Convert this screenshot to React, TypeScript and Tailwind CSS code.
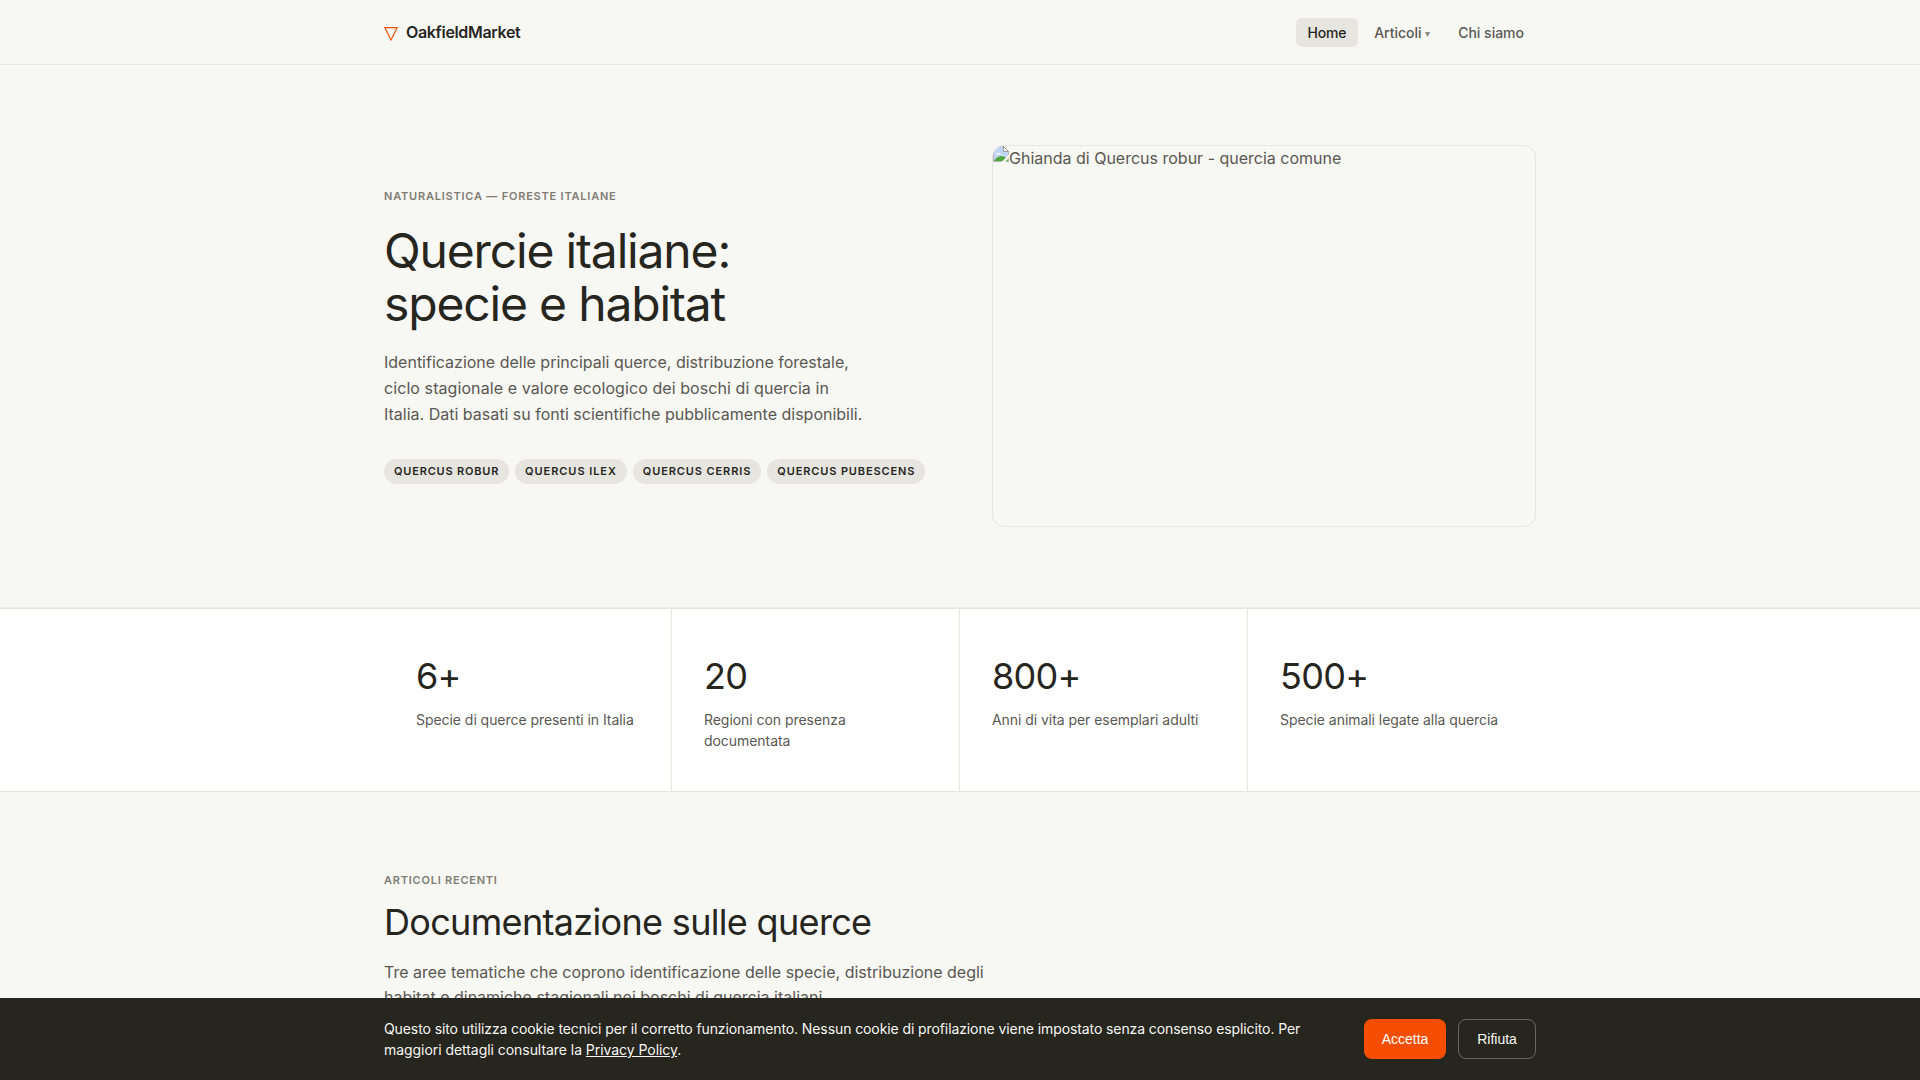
import { clsx } from 'clsx';

interface NavItem {
    label: string;
    active?: boolean;
    hasMenu?: boolean;
}

const navItems: NavItem[] = [
    { label: 'Home', active: true },
    { label: 'Articoli', hasMenu: true },
    { label: 'Chi siamo' },
];

const species = [
    { name: 'Quercus robur', tracking: 'tracking-[0.8px]' },
    { name: 'Quercus ilex', tracking: 'tracking-[0.94px]' },
    { name: 'Quercus cerris', tracking: 'tracking-[0.9px]' },
    { name: 'Quercus pubescens', tracking: 'tracking-[0.88px]' },
];

const stats = [
    { value: '6+', label: 'Specie di querce presenti in Italia' },
    { value: '20', label: 'Regioni con presenza documentata' },
    { value: '800+', label: 'Anni di vita per esemplari adulti' },
    { value: '500+', label: 'Specie animali legate alla quercia' },
];

function Header() {
    return (
        <header className="border-b border-[#e6e5e0] bg-[#f7f7f4]">
            <div className="mx-auto flex h-16 w-[1152px] items-center justify-between">
                <a href="#" className="flex items-center gap-2 text-base font-semibold tracking-[-0.34px] text-[#26251e]">
                    <svg width="14" height="14" viewBox="0 0 14 14" fill="none" className="mt-1">
                        <path d="M0.8 0.6H13.2L7 13Z" stroke="#f54e00" strokeWidth="1.1" />
                    </svg>
                    OakfieldMarket
                </a>
                <nav className="flex items-center gap-1">
                    {navItems.map(item => (
                        <a
                            key={item.label}
                            href="#"
                            className={clsx(
                                'flex items-center rounded-md px-3 py-1 text-sm leading-[21px] font-medium',
                                item.active ? 'bg-[#e6e5e0] tracking-[-0.25px] text-[#26251e]' : 'text-[#5a5852]'
                            )}
                        >
                            {item.label}
                            {item.hasMenu && (
                                <span className="mt-1 ml-[3.5px] font-['DejaVu_Sans',sans-serif] text-[10px] leading-3 font-normal opacity-70">
                                    ▾
                                </span>
                            )}
                        </a>
                    ))}
                </nav>
            </div>
        </header>
    );
}

function BrokenImageIcon() {
    return (
        <svg width="16" height="16" viewBox="0 0 16 16" className="shrink-0">
            <path d="M0.5 0.5H10.5L15.5 5.5V15.5H0.5Z" fill="#c2d5f7" stroke="#b4b4b4" />
            <path d="M3 8.5C3 7.2 4.4 6.8 5 7.4C5.6 6.2 7.6 6.6 7.6 8.5Z" fill="#fff" />
            <path d="M1 15V14.5C3 12 6 10 8.5 10C10.5 10 12.5 11 15 13.5V15Z" fill="#4fa83d" />
            <path d="M8.5 16L16 8.5V12L12 16Z" fill="#f7f7f4" />
            <path d="M10.5 0.5V5.5H15.5Z" fill="#fff" stroke="#9a9a9a" />
        </svg>
    );
}

function Hero() {
    return (
        <section className="border-b border-[#ecebe7] py-20">
            <div className="mx-auto grid w-[1152px] grid-cols-2 items-center gap-16">
                <div className="pb-px">
                    <p className="mb-5 text-[11px] leading-[18px] font-semibold tracking-[0.79px] text-[#807d72] uppercase">
                        Naturalistica — Foreste italiane
                    </p>
                    <h1 className="mb-[19px] text-5xl leading-[1.1] font-normal tracking-[-1.16px] text-[#26251e]">
                        Quercie italiane:
                        <br />
                        specie e habitat
                    </h1>
                    <p className="mb-8 max-w-[480px] text-base leading-[26px] text-[#5a5852]">
                        Identificazione delle principali querce, distribuzione forestale,{' '}
                        <span className="tracking-[0.08px]">
                            ciclo stagionale e valore ecologico dei boschi di quercia in{' '}
                        </span>
                        Italia. Dati basati su fonti scientifiche pubblicamente disponibili.
                    </p>
                    <div className="flex gap-1.5">
                        {species.map(item => (
                            <span
                                key={item.name}
                                className={clsx(
                                    'rounded-full bg-[#e6e5e0] px-2.5 py-1 text-[11px] leading-[17px] font-semibold whitespace-nowrap text-[#26251e] uppercase',
                                    item.tracking
                                )}
                            >
                                {item.name}
                            </span>
                        ))}
                    </div>
                </div>
                <div className="flex h-[382px] items-start overflow-hidden rounded-xl border border-[#e6e5e0]">
                    <BrokenImageIcon />
                    <span className="text-base leading-6 text-[#5a5852]">Ghianda di Quercus robur - quercia comune</span>
                </div>
            </div>
        </section>
    );
}

function Stats() {
    return (
        <section className="border-y border-[#e6e5e0] bg-white">
            <div className="mx-auto grid w-[1152px] grid-cols-4">
                {stats.map(stat => (
                    <div key={stat.value} className="h-[182px] border-r border-[#e6e5e0] px-8 pt-[49px] last:border-r-0">
                        <div className="mb-[15px] text-4xl leading-9 tracking-[-0.02em] text-[#26251e]">{stat.value}</div>
                        <div className="text-sm leading-[21px] tracking-[-0.05px] text-[#5a5852]">{stat.label}</div>
                    </div>
                ))}
            </div>
        </section>
    );
}

function RecentArticles() {
    return (
        <section className="py-20">
            <div className="mx-auto w-[1152px]">
                <p className="mb-[13px] text-[11px] leading-4 font-semibold tracking-[0.77px] text-[#807d72] uppercase">
                    Articoli recenti
                </p>
                <h2 className="mb-[15.5px] text-4xl leading-[43px] font-normal tracking-[-0.675px] text-[#26251e]">
                    Documentazione sulle querce
                </h2>
                <p className="max-w-[602px] text-base leading-[25px] text-[#5a5852]">
                    Tre aree tematiche che coprono identificazione delle specie, distribuzione degli habitat e dinamiche
                    stagionali nei boschi di quercia italiani.
                </p>
            </div>
        </section>
    );
}

function CookieBanner() {
    return (
        <div className="fixed inset-x-0 bottom-0 bg-[#26251e] py-5">
            <div className="mx-auto flex w-[1152px] items-center justify-between">
                <p className="w-[932px] text-sm leading-[21px] tracking-[-0.05px] text-[#f7f7f4]">
                    <span className="tracking-[-0.097px]">
                        Questo sito utilizza cookie tecnici per il corretto funzionamento. Nessun cookie di profilazione
                        viene impostato senza consenso esplicito. Per{' '}
                    </span>
                    maggiori dettagli consultare la{' '}
                    <a href="#" className="underline">
                        Privacy Policy
                    </a>
                    .
                </p>
                <div className="flex gap-3 font-['Liberation_Sans',sans-serif] text-sm font-medium">
                    <button type="button" className="h-10 w-[82px] rounded-lg bg-[#f54e00] text-white">
                        Accetta
                    </button>
                    <button type="button" className="h-10 w-[78px] rounded-lg border border-white/30 text-[#f7f7f4]">
                        Rifiuta
                    </button>
                </div>
            </div>
        </div>
    );
}

export default function App() {
    return (
        <div className="h-screen overflow-hidden bg-[#f7f7f4] font-['Inter',sans-serif]">
            <Header />
            <Hero />
            <Stats />
            <RecentArticles />
            <CookieBanner />
        </div>
    );
}
